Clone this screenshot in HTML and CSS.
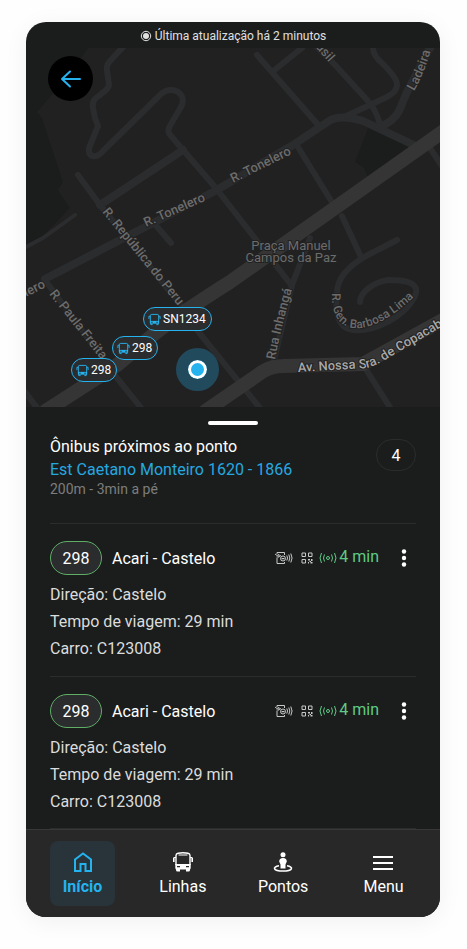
FILE: index.html
```html
<!DOCTYPE html>
<html lang="pt-BR">
<head>
    <meta charset="UTF-8">
    <meta name="viewport" content="width=device-width, initial-scale=1.0">
    <title>Ônibus próximos</title>
    <link rel="stylesheet" href="styles.css">
</head>
<body>
    <!-- Shared icons -->
    <svg class="sprite" aria-hidden="true">
        <symbol id="bus" viewBox="0 0 20 20">
            <path d="M3 13V3.500Q3 1.500 5 1.200Q10 .4 15 1.200Q17 1.500 17 3.500V13" fill="none" stroke="currentColor" stroke-width="1.400"/>
            <path d="M2.300 12H17.700V16Q17.700 17.500 16.200 17.500H3.800Q2.300 17.500 2.300 16Z" fill="currentColor"/>
            <path d="M3 17h4v2.500H4.500Q3 19.500 3 18ZM13 17h4v1q0 1.500-1.500 1.500H13zM0 5.500h1.600v4.500H0zM18.400 5.500H20v4.500h-1.600zM5.500 2.500h9v1h-9z" fill="currentColor"/>
            <path d="M1 5.500h2M17 5.500h2" stroke="currentColor"/>
            <path d="M4 14h3v1.300H4zM13 14h3v1.300h-3z" fill="#282828"/>
        </symbol>
        <symbol id="bus-line" viewBox="0 0 14 14">
            <path d="M2.500 9V3Q2.500 1.500 4 1.500H10Q11.500 1.500 11.500 3V9M3 11v1.500h2M11 11v1.500H9M2.500 3.500H1v3M11.500 3.500H13v3" fill="none" stroke="currentColor"/>
            <path d="M2 8.500h10v3H2z" fill="currentColor"/>
            <path d="M3.500 9.500h1.500v1H3.500zM9 9.500h1.500v1H9z" fill="#2b2c2e"/>
        </symbol>
        <symbol id="card" viewBox="0 0 18 14">
            <path d="M2 3V1.500h7.500V4M2 7v5.500h7.500V11" fill="none" stroke="currentColor"/>
            <path d="M0 3l2 1.500L4 3.500v2.500H1.500M4 5.500l2-1" fill="none" stroke="currentColor"/>
            <circle cx="8" cy="7.500" r="2.500" fill="none" stroke="currentColor"/>
            <path d="M6.500 7h3v1.200h-3z" fill="currentColor"/>
            <path d="M11.800 4.500q1.500 2.500 0 5M13.800 3.500q2 3.500 0 7M15.800 2.500q2.500 4.500 0 9" fill="none" stroke="currentColor"/>
        </symbol>
        <symbol id="qr" viewBox="0 0 12 12">
            <path d="M1 1h3.500v3.500H1zM7.500 1H11v3.500H7.500zM1 7.500h3.500V11H1z" fill="none" stroke="currentColor"/>
            <path d="M7 7h2v1.500H7zM10 7h1.500v2H10zM8.500 9H10v1H8.500zM7 10h1v1.500H7zM9.500 10h2v1.500h-2z" fill="currentColor"/>
        </symbol>
        <symbol id="signal" viewBox="0 0 18 12">
            <circle cx="9" cy="6" r="1.500" fill="none" stroke="currentColor"/>
            <path d="M5.500 2.500q-2 3.500 0 7M12.500 2.500q2 3.500 0 7M2.500 1q-3 5 0 10M15.500 1q3 5 0 10" fill="none" stroke="currentColor"/>
        </symbol>
    </svg>

    <div class="phone">
        <div class="status">
            <svg class="status-icon" viewBox="0 0 12 12" aria-hidden="true">
                <circle cx="6" cy="6" r="4.700" fill="none" stroke="currentColor"/>
                <circle cx="6" cy="6" r="3" fill="currentColor"/>
            </svg>
            <span>Última atualização há 2 minutos</span>
        </div>

        <div class="map">
            <svg class="map-canvas" viewBox="0 0 414 359" preserveAspectRatio="xMinYMin slice">
                <defs>
                    <path id="p-brasil" d="M281 -10L316 29"/>
                    <path id="p-ladeira" d="M388 43Q400 23 408 -10"/>
                    <path id="p-ton1" d="M207 135L276 101"/>
                    <path id="p-ton2" d="M120 179L190 148"/>
                    <path id="p-ton3" d="M-6 252L30 234"/>
                    <path id="p-peru" d="M76 164L166 275"/>
                    <path id="p-paula" d="M23 246L92 333"/>
                    <path id="p-inhanga" d="M249 312Q257 270 270 228"/>
                    <path id="p-barbosa" d="M306 245C304 292 345 292 392 245"/>
                    <path id="p-copa" d="M272 324L340 320Q350 318 362 310L440 265"/>
                </defs>
                <path class="park" d="M0 0H62L45 25L11 64L16 70L37 134L32 142L44 160L17 188L0 197Z"/>
                <path class="park" d="M342 80L391 99L342 130L338 120L329 114Z"/>
                <g class="road">
                    <path d="M98 -2L84 13Q80 17 81 23L83 36Q83 40 79 43L70 50Q66 53 67 60L69 70L72 78L63 100C62 110 70 111 77 103L135 46C146 36 162 46 155 59L145 76Q140 83 145 88L189 139L266 238"/>
                    <path d="M157 102L74 157" class="wide"/>
                    <path d="M52 127L74 157L157 260L171 282L234 360"/>
                    <path class="wide" d="M19 231L94 192L189 143L267 97L303 73Q314 66 337 73L390 98"/>
                    <path d="M19 232L91 330L116 361M-4 340L12 361"/>
                    <path class="thin" d="M-2 200L17 190L49 167"/>
                    <path d="M127 174L145 195"/>
                    <path d="M231 7L294 79M246 24L276 0"/>
                    <path d="M286 -6L311 19L342 53Q349 60 354 76"/>
                    <path d="M347 0Q347 8 357 16C371 30 378 40 361 49L318 69"/>
                    <path class="wide" d="M405 -2L381 44L373 63Q368 73 354 79"/>
                    <path d="M272 99L307 156M404 100L418 121"/>
                    <path d="M316 168L335 209M284 190L266 237L247 316M341 323L365 361"/>
                    <path d="M371 192L340 208Q312 224 311 244C309 262 311 280 327 282C350 284 378 268 388 250C398 232 372 232 362 232C348 234 334 244 334 254"/>
                </g>
                <g class="avenue">
                    <path d="M422 80L299 167L204 234Q150 268 127 287L91 317L18 364"/>
                    <path d="M178 364L236 324Q245 318 257 318L337 316L424 268"/>
                </g>
                <g class="street-name">
                    <text><textPath href="#p-brasil">Brasil</textPath></text>
                    <text><textPath href="#p-ladeira">Ladeira</textPath></text>
                    <text><textPath href="#p-ton1">R. Tonelero</textPath></text>
                    <text><textPath href="#p-ton2">R. Tonelero</textPath></text>
                    <text><textPath href="#p-ton3">elero</textPath></text>
                    <text><textPath href="#p-peru">R. República do Peru</textPath></text>
                    <text><textPath href="#p-paula">R. Paula Freita</textPath></text>
                    <text><textPath href="#p-inhanga">Rua Inhangá</textPath></text>
                    <text class="small"><textPath href="#p-barbosa">R. Gen. Barbosa Lima</textPath></text>
                    <text class="place" x="265" y="202">Praça Manuel</text>
                    <text class="place" x="265" y="214">Campos da Paz</text>
                    <text class="main"><textPath href="#p-copa">Av. Nossa Sra. de Copacab</textPath></text>
                </g>
            </svg>

            <button class="back" aria-label="Voltar">
                <svg width="22" height="18" viewBox="0 0 22 18" fill="none" stroke="currentColor" stroke-width="2" stroke-linecap="round" stroke-linejoin="round">
                    <path d="M20 9H2M10 1.500L2 9L10 16.500"/>
                </svg>
            </button>
            <button class="pin pin-a"><svg class="pin-icon"><use href="#bus-line"/></svg>SN1234</button>
            <button class="pin pin-b"><svg class="pin-icon"><use href="#bus-line"/></svg>298</button>
            <button class="pin pin-c"><svg class="pin-icon"><use href="#bus-line"/></svg>298</button>
            <span class="me"></span>
        </div>

        <main class="sheet">
            <div class="handle"></div>
            <header class="stop">
                <div>
                    <h1>Ônibus próximos ao ponto</h1>
                    <a class="stop-name" href="#">Est Caetano Monteiro 1620 - 1866</a>
                    <p class="distance">200m - 3min a pé</p>
                </div>
                <span class="count">4</span>
            </header>

            <article class="line">
                <div class="line-top">
                    <span class="badge">298</span>
                    <h2>Acari - Castelo</h2>
                    <div class="eta">
                        <svg class="card-icon"><use href="#card"/></svg>
                        <svg class="qr-icon"><use href="#qr"/></svg>
                        <svg class="signal-icon"><use href="#signal"/></svg>
                        <span class="time">4 min</span>
                    </div>
                    <button class="more" aria-label="Mais opções">
                        <svg width="6" height="18" viewBox="0 0 6 18" fill="currentColor"><circle cx="3" cy="2.500" r="2.200"/><circle cx="3" cy="9" r="2.200"/><circle cx="3" cy="15.500" r="2.200"/></svg>
                    </button>
                </div>
                <p>Direção: Castelo</p>
                <p>Tempo de viagem: 29 min</p>
                <p>Carro: C123008</p>
            </article>

            <article class="line">
                <div class="line-top">
                    <span class="badge">298</span>
                    <h2>Acari - Castelo</h2>
                    <div class="eta">
                        <svg class="card-icon"><use href="#card"/></svg>
                        <svg class="qr-icon"><use href="#qr"/></svg>
                        <svg class="signal-icon"><use href="#signal"/></svg>
                        <span class="time">4 min</span>
                    </div>
                    <button class="more" aria-label="Mais opções">
                        <svg width="6" height="18" viewBox="0 0 6 18" fill="currentColor"><circle cx="3" cy="2.500" r="2.200"/><circle cx="3" cy="9" r="2.200"/><circle cx="3" cy="15.500" r="2.200"/></svg>
                    </button>
                </div>
                <p>Direção: Castelo</p>
                <p>Tempo de viagem: 29 min</p>
                <p>Carro: C123008</p>
            </article>
        </main>

        <nav class="tabs">
            <a class="tab active" href="#">
                <svg class="tab-icon" viewBox="0 0 20 20" fill="none" stroke="currentColor" stroke-width="2">
                    <path d="M2 7.500L10 1.500L18 7.500V19H12.500V12H7.500V19H2Z"/>
                </svg>
                Início
            </a>
            <a class="tab" href="#">
                <svg class="tab-icon"><use href="#bus"/></svg>
                Linhas
            </a>
            <a class="tab" href="#">
                <svg class="tab-icon" viewBox="0 0 20 20" fill="currentColor">
                    <circle cx="10" cy="2.800" r="2.500"/>
                    <path d="M6.200 9.500Q6.200 6 10 6T13.800 9.500L12.500 12.500V16.500H7.500V12.500Z"/>
                    <path d="M6 13.800C-1 14.800 0 19 10 19S21 14.800 14 13.800" fill="none" stroke="currentColor" stroke-width="1.600"/>
                </svg>
                Pontos
            </a>
            <a class="tab" href="#">
                <svg class="tab-icon" viewBox="0 0 20 20" stroke="currentColor" stroke-width="2">
                    <path d="M0 5H20M0 11H20M0 17H20"/>
                </svg>
                Menu
            </a>
        </nav>
    </div>
</body>
</html>
```
FILE: styles.css
```css
* {
    box-sizing: border-box;
}

body {
    margin: 0;
    padding: 22px 27px 31px 26px;
    background-color: #fefefe;
    font-family: Roboto, sans-serif;
    font-size: 16px;
    color: #fff;
}

h1, h2, p {
    margin: 0;
    font-size: 16px;
    font-weight: 400;
}

button {
    padding: 0;
    border: none;
    background: none;
    color: inherit;
    font: inherit;
    cursor: pointer;
}

a {
    color: inherit;
    text-decoration: none;
}

.sprite {
    display: none;
}

.phone {
    overflow: hidden;
    border-radius: 20px;
    background-color: #1b1d1c;
    box-shadow: 0 4px 24px rgba(0,0,0,0.06);
}

.status {
    display: flex;
    align-items: center;
    justify-content: center;
    gap: 3px;
    height: 26px;
    padding-top: 2px;
    font-size: 12px;
    color: #e0e0e0;
}

.status-icon {
    width: 12px;
    height: 12px;
}

/* Map */
.map {
    position: relative;
    height: 359px;
    overflow: hidden;
    background-color: #212121;
}

.map-canvas {
    display: block;
    width: 100%;
    height: 100%;
}

.park {
    fill: #1b1d1c;
}

.road {
    fill: none;
    stroke: #2b2c2e;
    stroke-width: 6;
    stroke-linecap: round;
    stroke-linejoin: round;
}

.road .wide {
    stroke-width: 8;
}

.road .thin {
    stroke-width: 4;
}

.avenue {
    fill: none;
    stroke: #353535;
    stroke-width: 14;
}

.street-name {
    font-size: 13px;
    font-weight: 500;
    fill: #6c6c6c;
    stroke: #212121;
    stroke-width: 2;
    paint-order: stroke;
}

.street-name .place {
    font-weight: 400;
    text-anchor: middle;
}

.street-name .small {
    font-size: 12px;
}

.street-name .main {
    fill: #a8a8a8;
}

.back {
    position: absolute;
    top: 8px;
    left: 22px;
    display: flex;
    align-items: center;
    justify-content: center;
    width: 45px;
    height: 45px;
    border-radius: 50%;
    background-color: #000;
    color: #25b3f0;
}

.pin {
    position: absolute;
    display: flex;
    align-items: center;
    gap: 2px;
    height: 24px;
    padding: 0 5px 0 4px;
    border: 1px solid #25b3f0;
    border-radius: 12px;
    background-color: #2b2c2e;
    font-size: 12px;
}

.pin-icon {
    width: 13px;
    height: 13px;
    color: #25b3f0;
}

.pin-a {
    top: 259px;
    left: 117px;
}

.pin-b {
    top: 288px;
    left: 86px;
}

.pin-c {
    top: 310px;
    left: 45px;
}

.me {
    position: absolute;
    top: 300px;
    left: 150px;
    width: 43px;
    height: 43px;
    border: 12px solid #224a5d;
    border-radius: 50%;
    background-color: #25b3f0;
    box-shadow: inset 0 0 0 3px #fff;
}

/* Bottom sheet */
.sheet {
    padding: 14px 24px 0;
}

.handle {
    width: 50px;
    height: 4px;
    margin: 0 auto 10px;
    border-radius: 2px;
    background-color: #fff;
}

.stop {
    display: flex;
    justify-content: space-between;
    padding-bottom: 27px;
    line-height: 23px;
}

.stop-name {
    color: #25a8e0;
}

.distance {
    padding-top: 1px;
    font-size: 14px;
    line-height: 14px;
    color: #7c7d7d;
}

.count {
    display: flex;
    align-items: center;
    justify-content: center;
    width: 40px;
    height: 32px;
    margin-top: 4px;
    border: 1px solid #2b2d2c;
    border-radius: 16px;
}

.line {
    padding: 17px 0 14px;
    border-top: 1px solid #2b2d2c;
}

.line:last-child {
    padding-bottom: 13px;
    border-bottom: 1px solid #2b2d2c;
}

.line p {
    line-height: 27px;
    color: #dcdcdc;
}

.line-top {
    display: flex;
    align-items: center;
    margin-bottom: 6px;
}

.badge {
    width: 52px;
    height: 34px;
    margin-right: 10px;
    border: 1px solid #5fae66;
    border-radius: 17px;
    background-color: #2b2c2e;
    line-height: 34px;
    text-align: center;
}

.eta {
    display: flex;
    align-items: center;
    margin-left: auto;
    color: #c8c8c8;
}

.card-icon {
    width: 18px;
    height: 14px;
    margin-right: 8px;
}

.qr-icon {
    width: 12px;
    height: 12px;
    margin-right: 6px;
}

.signal-icon {
    width: 18px;
    height: 12px;
    margin-right: 2px;
    color: #5fcb86;
}

.time {
    padding-bottom: 4px;
    color: #5fcb86;
}

.more {
    display: flex;
    align-items: center;
    justify-content: center;
    width: 24px;
    height: 34px;
    margin-left: 13px;
}

/* Tab bar */
.tabs {
    display: flex;
    justify-content: space-between;
    padding: 11px 24px;
    border-top: 1px solid #383838;
    background-color: #282828;
}

.tab {
    display: flex;
    flex-direction: column;
    align-items: center;
    justify-content: center;
    gap: 4px;
    width: 65px;
    height: 65px;
    padding-top: 3px;
    border-radius: 8px;
    line-height: 22px;
}

.tab.active {
    background-color: #28333a;
    color: #25b3f0;
    font-weight: 700;
}

.tab-icon {
    width: 20px;
    height: 20px;
}
```
